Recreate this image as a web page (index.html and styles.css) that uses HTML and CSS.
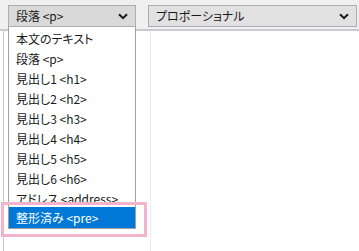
FILE: index.html
```html
<!DOCTYPE html>
<html lang="ja">
<head>
<meta charset="utf-8">
<link rel="stylesheet" href="styles.css">
</head>
<body>
<div class="toolbar">
  <div class="select select-format">
    <span class="select-label">段落 &lt;p&gt;</span>
    <svg class="chev" width="10" height="7" viewBox="0 0 10 7"><path d="M1 1.2 L5 5.2 L9 1.2" fill="none" stroke="#1a1a1a" stroke-width="2"/></svg>
  </div>
  <div class="select select-font">
    <span class="select-label">プロポーショナル</span>
    <svg class="chev" width="10" height="7" viewBox="0 0 10 7"><path d="M1 1.2 L5 5.2 L9 1.2" fill="none" stroke="#1a1a1a" stroke-width="2"/></svg>
  </div>
</div>
<div class="content">
  <div class="guide guide-left"></div>
  <div class="guide guide-right"></div>
  <ul class="dropdown">
    <li>本文のテキスト</li>
    <li>段落 &lt;p&gt;</li>
    <li>見出し1 &lt;h1&gt;</li>
    <li>見出し2 &lt;h2&gt;</li>
    <li>見出し3 &lt;h3&gt;</li>
    <li>見出し4 &lt;h4&gt;</li>
    <li>見出し5 &lt;h5&gt;</li>
    <li>見出し6 &lt;h6&gt;</li>
    <li>アドレス &lt;address&gt;</li>
    <li class="selected">整形済み &lt;pre&gt;</li>
  </ul>
  <div class="highlight"></div>
</div>
</body>
</html>
```
FILE: styles.css
```css
html, body {
  margin: 0;
  padding: 0;
  background: #ffffff;
  width: 359px;
  height: 251px;
  overflow: hidden;
  font-family: "Noto Sans CJK JP", "Noto Sans", sans-serif;
  font-size: 12px;
  font-feature-settings: "palt";
  color: #1a1a1a;
}

.toolbar {
  background: #f0f0f0;
  border-bottom: 2px solid #c6cbd1;
  display: flex;
  align-items: flex-start;
  padding: 5px 0 0 8px;
  box-sizing: border-box;
  height: 31px;
  gap: 12px;
}

.select {
  height: 22px;
  box-sizing: border-box;
  border: 1px solid #adadad;
  background: #e1e1e1;
  display: flex;
  align-items: center;
  justify-content: space-between;
  padding: 0 7px 0 7px;
}

.select-format {
  width: 128px;
  background: #d9d9d9;
}

.select-font {
  width: 209px;
}

.select-label {
  line-height: 20px;
  white-space: nowrap;
}

.chev {
  display: block;
}

.content {
  position: relative;
  height: 220px;
}

.guide {
  position: absolute;
  top: 0;
  bottom: 0;
  width: 1px;
}

.guide-left {
  left: 3px;
  background: #c8c8c8;
}

.guide-right {
  left: 150px;
  background: #ececec;
}

.dropdown {
  position: absolute;
  left: 8px;
  top: -4px;
  width: 128px;
  margin: 0;
  padding: 0;
  list-style: none;
  background: #ffffff;
  border: 1px solid #a0a0a0;
  border-top: none;
  box-sizing: border-box;
}

.dropdown li {
  height: 18px;
  line-height: 20px;
  padding: 2px 0 0 7px;
  white-space: nowrap;
  overflow: hidden;
}

.dropdown li.selected {
  height: 21px;
  padding-top: 0;
  line-height: 21px;
  background: #0078d7;
  color: #ffffff;
}

.highlight {
  position: absolute;
  left: 1px;
  top: 171px;
  width: 146px;
  height: 35px;
  box-sizing: border-box;
  border: 3px solid #f4b4ce;
}
```
